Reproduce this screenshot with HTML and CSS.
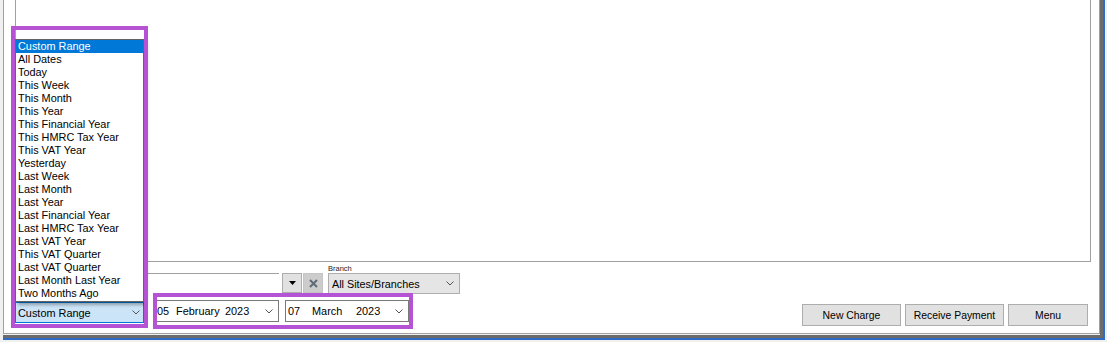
FILE: index.html
```html
<!DOCTYPE html>
<html lang="en">
<head>
    <meta charset="UTF-8">
    <title>Charges</title>
    <link rel="stylesheet" href="styles.css">
</head>
<body>

<div class="window">
    <div class="frame-blue">
        <div class="frame-dark">
            <div class="panel">
                <div class="grid"></div>

                <div class="filters">
                    <div class="textbox"></div>
                    <button class="drop-btn">
                        <svg width="7" height="4" viewBox="0 0 7 4"><polygon points="0,0 7,0 3.5,4" fill="#000"/></svg>
                    </button>
                    <button class="clear-btn">
                        <svg width="9" height="9" viewBox="0 0 9 9"><path d="M1 1 L8 8 M8 1 L1 8" stroke="#5f6a78" stroke-width="2"/></svg>
                    </button>
                    <div class="field">
                        <label class="field-label">Branch</label>
                        <div class="select branch-select">
                            <span>All Sites/Branches</span>
                            <svg class="chevron" width="8" height="5" viewBox="0 0 8 5"><polyline points="0.5,0.5 4,4 7.5,0.5" fill="none" stroke="#555"/></svg>
                        </div>
                    </div>
                </div>

                <div class="actions">
                    <div class="select combo">
                        <span>Custom Range</span>
                        <svg class="chevron" width="8" height="5" viewBox="0 0 8 5"><polyline points="0.5,0.5 4,4 7.5,0.5" fill="none" stroke="#555"/></svg>
                    </div>
                    <div class="date-range">
                        <div class="datepicker from">
                            <span class="dp-day">05</span>
                            <span class="dp-month">February</span>
                            <span class="dp-year">2023</span>
                            <svg class="chevron" width="8" height="5" viewBox="0 0 8 5"><polyline points="0.5,0.5 4,4 7.5,0.5" fill="none" stroke="#555"/></svg>
                        </div>
                        <div class="datepicker to">
                            <span class="dp-day">07</span>
                            <span class="dp-month">March</span>
                            <span class="dp-year">2023</span>
                            <svg class="chevron" width="8" height="5" viewBox="0 0 8 5"><polyline points="0.5,0.5 4,4 7.5,0.5" fill="none" stroke="#555"/></svg>
                        </div>
                    </div>
                    <div class="buttons">
                        <button class="btn btn-wide">New Charge</button>
                        <button class="btn btn-wide">Receive Payment</button>
                        <button class="btn btn-menu">Menu</button>
                    </div>
                </div>
            </div>
        </div>
    </div>

    <!-- open dropdown of the period combo -->
    <ul class="dropdown-list">
        <li class="selected">Custom Range</li>
        <li>All Dates</li>
        <li>Today</li>
        <li>This Week</li>
        <li>This Month</li>
        <li>This Year</li>
        <li>This Financial Year</li>
        <li>This HMRC Tax Year</li>
        <li>This VAT Year</li>
        <li>Yesterday</li>
        <li>Last Week</li>
        <li>Last Month</li>
        <li>Last Year</li>
        <li>Last Financial Year</li>
        <li>Last HMRC Tax Year</li>
        <li>Last VAT Year</li>
        <li>This VAT Quarter</li>
        <li>Last VAT Quarter</li>
        <li>Last Month Last Year</li>
        <li>Two Months Ago</li>
    </ul>

    <!-- annotation boxes -->
    <div class="mark mark-period"></div>
    <div class="mark mark-dates"></div>
</div>

</body>
</html>
```

FILE: styles.css
```css
* {
    box-sizing: border-box;
}
body {
    margin: 0;
    font-family: "Liberation Sans", Arial, sans-serif;
    font-size: 10.5px;
    color: #000;
    background: #f0f0f0;
}
button {
    font-family: inherit;
    font-size: inherit;
    color: inherit;
    padding: 0;
}
.window {
    position: relative;
    width: 1107px;
    height: 342px;
    padding: 0 2px 2px 3px;
    background: #f0f0f0;
}
.frame-blue {
    height: 100%;
    border-right: 2px solid #2e6bc6;
    border-bottom: 2px solid #2e6bc6;
}
.frame-dark {
    height: 100%;
    border-right: 3px solid #6b6b6b;
    border-bottom: 3px solid #6b6b6b;
    padding-bottom: 1px;
    background: #f0f0f0;
}
.panel {
    height: 100%;
    background: #fff;
    border-left: 1px solid #a0a0a0;
    border-right: 1px solid #a0a0a0;
    border-bottom: 1px solid #a0a0a0;
}
.grid {
    margin-left: 11px;
    width: 1076px;
    height: 262px;
    border: 1px solid #a0a0a0;
    border-top: none;
    background: #fff;
}

/* first row: search box and branch */
.filters {
    display: flex;
    align-items: flex-start;
    height: 38px;
    padding: 11px 0 0 11px;
}
.textbox {
    width: 264px;
    height: 20px;
    border-top: 1px solid #a0a0a0;
}
.drop-btn, .clear-btn {
    display: flex;
    align-items: center;
    justify-content: center;
    width: 20px;
    height: 20px;
    border: 1px solid #adadad;
    background: #e1e1e1;
}
.drop-btn {
    margin-left: 3px;
}
.clear-btn {
    margin-left: 1px;
    background: #cccccc;
    border-color: #c4c4c4;
}
.field {
    display: flex;
    flex-direction: column;
    margin: -9px 0 0 5px;
}
.field-label {
    height: 9px;
    font-size: 7.5px;
    line-height: 9px;
    color: #222;
}
.select {
    display: flex;
    align-items: center;
    height: 21px;
    border: 1px solid #adadad;
    background: #e5e5e5;
    padding: 0 5px 0 3px;
}
.select .chevron {
    margin-left: auto;
}
.branch-select {
    width: 132px;
    font-size: 10.8px;
}

/* second row: period, dates and buttons */
.actions {
    display: flex;
    align-items: flex-start;
    height: 33px;
    padding-left: 11px;
}
.combo {
    width: 129px;
    margin-top: 2px;
    padding: 0 3px 0 2px;
    background: #cce4f7;
    border-color: #0078d7;
    font-size: 10.9px;
}
.date-range {
    display: flex;
    gap: 6px;
    margin-left: 12px;
}
.datepicker {
    display: flex;
    align-items: center;
    height: 22px;
    border: 1px solid #7a7a7a;
    background: #fff;
    padding-right: 5px;
    white-space: nowrap;
    font-size: 10.9px;
}
.datepicker .chevron {
    margin-left: auto;
}
.from {
    width: 123px;
    padding-left: 0;
}
.from .dp-day {
    width: 19px;
}
.from .dp-month {
    width: 49px;
}
.to {
    width: 124px;
    padding-left: 2px;
}
.to .dp-day {
    width: 24px;
}
.to .dp-month {
    width: 44px;
}
.buttons {
    display: flex;
    gap: 4px;
    margin: 4px 11px 0 auto;
}
.btn {
    height: 22px;
    border: 1px solid #adadad;
    background: #e1e1e1;
    text-align: center;
    font-size: 10.4px;
}
.btn-wide {
    width: 99px;
}
.btn-menu {
    width: 80px;
}

/* popup list of the period combo */
.dropdown-list {
    position: absolute;
    left: 15px;
    top: 39px;
    width: 129px;
    height: 263px;
    margin: 0;
    padding: 0;
    list-style: none;
    background: #fff;
    border: 1px solid #646464;
    box-shadow: 3px 3px 3px rgba(0, 0, 0, 0.3);
    font-size: 10.9px;
}
.dropdown-list li {
    height: 13px;
    line-height: 13px;
    padding-left: 2px;
    white-space: nowrap;
}
.dropdown-list .selected {
    background: #0078d7;
    color: #fff;
}

/* purple annotation outlines */
.mark {
    position: absolute;
    border: 4px solid #b653d5;
    pointer-events: none;
}
.mark-period {
    left: 11px;
    top: 26px;
    width: 137px;
    height: 302px;
}
.mark-dates {
    left: 153px;
    top: 293px;
    width: 260px;
    height: 36px;
}
```
